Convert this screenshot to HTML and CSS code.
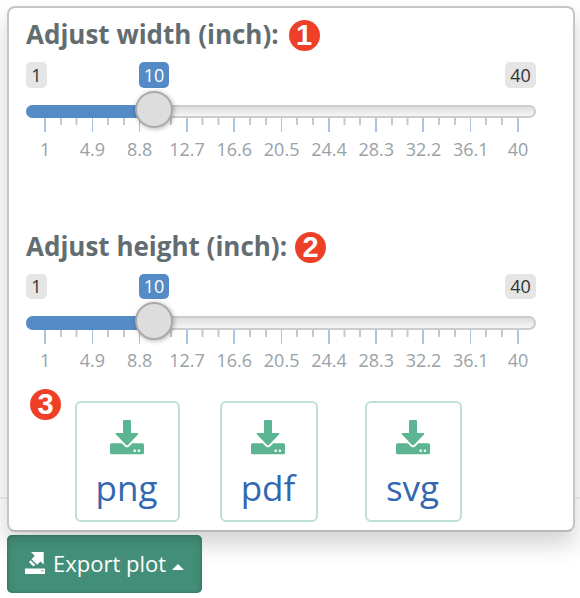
FILE: index.html
```html
<!DOCTYPE html>
<html lang="en">
<head>
<meta charset="utf-8">
<title>Export plot</title>
<link rel="stylesheet" href="styles.css">
</head>
<body>
<svg class="defs" width="0" height="0">
  <defs>
    <g id="ticks">
      <path class="minor" d="M35 0v7M50.5 0v7M82 0v7M98 0v7M129.5 0v7M145 0v7M176.5 0v7M192.500 0v7M224 0v7M240 0v7M271 0v7M287 0v7M318.500 0v7M334 0v7M366 0v7M381.500 0v7M413 0v7M429 0v7M460 0v7M476 0v7"/>
      <path class="major" d="M19 0v14M161 0v14M208 0v14M303 0v14M350 0v14M397 0v14M492 0v14"/>
      <path class="major thin" d="M66.500 0v14M113.500 0v14M255.500 0v14M444.500 0v14"/>
    </g>
    <g id="download">
      <path fill-rule="evenodd" d="M14.300 0h5.400q1.300 0 1.300 1.300V13h6.300q1.800 0 .7 1.400L18.200 24.800q-1.200 1.100-2.400 0L6 14.400Q4.900 13 6.700 13H13V1.300Q13 0 14.300 0ZM1.500 23.300h10.200l3.200 3.100q2.100 1.800 4.200 0l3.200-3.100h10.200q1.500 0 1.500 1.500v8q0 1.500-1.500 1.500h-31Q0 34.300 0 32.800v-8q0-1.500 1.500-1.500ZM24.700 29.500a1.300 1.300 0 1 0 0 2.600a1.300 1.300 0 0 0 0-2.600ZM28.900 29.500a1.300 1.300 0 1 0 0 2.600a1.300 1.300 0 0 0 0-2.600Z"/>
    </g>
  </defs>
</svg>
<main class="page">
  <section class="panel">
    <div class="control">
      <h2 class="title"><span>Adjust width (inch):</span> <span class="badge">1</span></h2>
      <div class="values"><span>1</span><span class="current">10</span><span>40</span></div>
      <div class="track"><div class="fill"></div><div class="handle"></div></div>
      <svg class="ticks" width="510" height="14"><use href="#ticks"/></svg>
      <div class="labels"><span>1</span><span>4.9</span><span>8.8</span><span>12.7</span><span>16.6</span><span>20.5</span><span>24.4</span><span>28.3</span><span>32.2</span><span>36.1</span><span>40</span></div>
    </div>
    <div class="control height">
      <h2 class="title"><span>Adjust height (inch):</span> <span class="badge">2</span></h2>
      <div class="values"><span>1</span><span class="current">10</span><span>40</span></div>
      <div class="track"><div class="fill"></div><div class="handle"></div></div>
      <svg class="ticks" width="510" height="14"><use href="#ticks"/></svg>
      <div class="labels"><span>1</span><span>4.9</span><span>8.8</span><span>12.7</span><span>16.6</span><span>20.5</span><span>24.4</span><span>28.3</span><span>32.2</span><span>36.1</span><span>40</span></div>
    </div>
    <div class="downloads">
      <span class="badge">3</span>
      <a class="file png"><svg width="34" height="35"><use href="#download"/></svg><span>png</span></a>
      <a class="file pdf"><svg width="34" height="35"><use href="#download"/></svg><span>pdf</span></a>
      <a class="file svg"><svg width="34" height="35"><use href="#download"/></svg><span>svg</span></a>
    </div>
  </section>
  <button class="export">
    <svg class="out" width="20" height="22" viewBox="0 0 20 22"><path fill-rule="evenodd" d="M6 0h12.700v12.500l-3.200-3-3.300 3.300-5.700-5.600L9.700 3.800ZM5.600 8.200l4.600 4.600-1.400 1.400-1.500-.8L4 10ZM0 16.500h20V22H0ZM16.500 18.300v1h2v-1Z"/></svg>
    <span>Export plot</span>
    <i class="caret"></i>
  </button>
</main>
</body>
</html>
```
FILE: styles.css
```css
* { box-sizing: border-box; }
body {
  margin: 0;
  background: linear-gradient(#fff 497px, #ecf0f0 497px, #ecf0f0 499px, #fff 499px);
  font-family: "Open Sans", sans-serif;
  overflow: hidden;
}
.defs { position: absolute; }
.page { height: 598px; padding: 6px 0 0 7px; }
.panel {
  width: 568px;
  height: 526px;
  padding: 12px 17px 0;
  border: 2px solid #c6c6c6;
  border-bottom-color: #b8b8b8;
  border-radius: 8px;
  background: #fff;
  box-shadow: 0 12px 24px rgba(0, 0, 0, .18);
}
.control { width: 510px; height: 212px; }
.control.height { height: 169px; }
.title {
  display: flex;
  align-items: center;
  gap: 10px;
  height: 31px;
  margin: 0;
  color: #626d71;
  font-size: 26px;
  font-weight: 700;
  line-height: 29px;
  white-space: nowrap;
}
.title span:first-child { padding-bottom: 2px; }
.height .title { gap: 8px; }
.badge {
  flex: none;
  width: 31px;
  height: 31px;
  border-radius: 50%;
  background: #ee4026;
  color: #fff;
  font: 700 29px/31px "Liberation Sans", sans-serif;
  text-align: center;
}
.values {
  display: grid;
  grid-template-columns: 21px 30px 31px;
  column-gap: 92px;
  height: 25px;
  margin-top: 11px;
  color: #333;
  font-size: 18px;
  line-height: 26px;
  text-align: center;
}
.control.height .values { line-height: 25px; }
.values span { border-radius: 5px; background: #e5e5e5; }
.values .current { background: #548ac6; color: #fff; }
.values span:last-child { margin-left: 244px; width: 31px; }
.track {
  position: relative;
  height: 13px;
  margin-top: 18px;
  border: 2px solid #ccc;
  border-radius: 7px;
  background: linear-gradient(#dedede, #f6f6f6);
}
.control.height .track { height: 14px; margin-top: 17px; }
.fill {
  width: 128px;
  height: 13px;
  margin: -2px 0 0 -2px;
  border-radius: 7px 0 0 7px;
  background: #548ac6;
}
.control.height .fill { height: 14px; }
.handle {
  position: absolute;
  left: 107px;
  top: -16px;
  width: 38px;
  height: 37px;
  border: 2px solid #aaa;
  border-radius: 50%;
  background: #ddd;
  box-shadow: 1px 1px 5px rgba(0, 0, 0, .3);
}
.control.height .handle { height: 38px; }
.ticks { display: block; }
.minor, .major { fill: none; stroke: #c8c8c8; stroke-width: 2; }
.major { stroke: #a9c5e3; }
.thin { stroke-width: 1; }
.labels {
  display: grid;
  grid-template-columns: repeat(11, 47.3px);
  margin: 5px 0 0 -4.500px;
  color: #99a2a7;
  font-size: 18px;
  line-height: 25px;
  text-align: center;
}
.control.height .labels { margin-top: 4px; }
.downloads { display: flex; padding-left: 4px; }
.downloads .badge { margin-top: -12px; }
.file {
  display: flex;
  flex-direction: column;
  align-items: center;
  height: 121px;
  padding: 17px 2px 0 0;
  border: 2px solid #bde2d3;
  border-radius: 6px;
  color: #3267b1;
  fill: #5cb592;
  font-size: 35px;
  line-height: 48px;
}
.file span { margin-top: 9px; }
.png { width: 105px; margin-left: 14px; }
.pdf { width: 98px; margin-left: 40px; }
.svg { width: 97px; margin-left: 47px; }
.export {
  display: flex;
  align-items: center;
  width: 195px;
  height: 58px;
  margin-top: 3px;
  padding: 0 0 0 18px;
  border: 0;
  border-radius: 5px;
  background: #438e78;
  box-shadow: inset 0 6px 10px rgba(0, 0, 0, .12), inset 0 0 3px rgba(0, 0, 0, .25);
  color: #fff;
  fill: #fff;
  font: 22px/30px "Open Sans", sans-serif;
  white-space: nowrap;
}
.export span { margin: -2px 0 0 8px; }
.out { margin-top: -3px; }
.caret {
  margin: 6px 0 0 6px;
  border: 6px solid transparent;
  border-top: 0;
  border-bottom-color: #fff;
}
```
